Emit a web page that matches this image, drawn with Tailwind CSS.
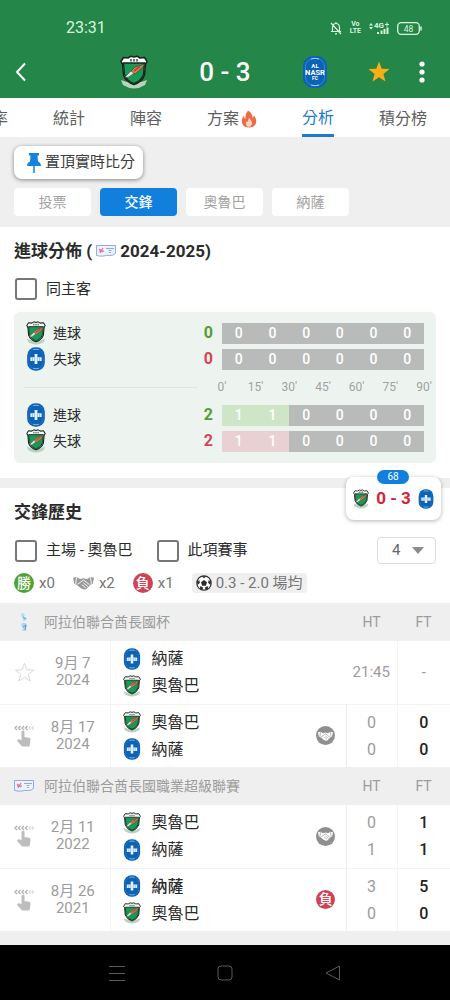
<!DOCTYPE html>
<html lang="zh-Hant">
<head>
  <meta charset="utf-8">
  <meta name="viewport" content="width=device-width, initial-scale=1">
  <title>奧魯巴 0 - 3 納薩</title>
  <script src="https://cdn.jsdelivr.net/npm/@tailwindcss/browser@4"></script>
</head>
<body class="min-h-screen flex flex-col bg-[#efefef] font-[Roboto,'Noto_Sans_CJK_TC',sans-serif] text-[#2b2b2b] overflow-x-hidden">

  <!-- Shared icons -->
  <svg class="hidden" aria-hidden="true">
    <symbol id="crest-home" viewBox="0 0 28 34">
      <path d="M1 25 Q14 31 27 25 L25 30 Q14 37 3 30Z" fill="#b9d3bf"/>
      <path d="M3.5 2.5 L8 3 L11 1.2 L14 2 L17 1.2 L20 3 L24.500 2.500 L27 6.500 L25.500 9 L24.500 20 Q22 27 14 29.500 Q6 27 3.500 20 L2.500 9 L1 6.500Z" fill="#fff" stroke="#15251b" stroke-width="1.500" stroke-linejoin="round"/>
      <path d="M3.500 8 H24.500 L23.500 19.500 Q21 26 14 28.500 Q7 26 4.500 19.500Z" fill="#179a56" stroke="#15251b" stroke-width="1.300"/>
      <path d="M10 4h2v2.500h-2zM13 4h2v2.500h-2zM16 4h2v2.500h-2z" fill="#6b756f"/>
      <path d="M5 22 L12 15 L15 17.500 L8 22.500Z" fill="#e9e4da" stroke="#44524a" stroke-width=".6"/>
      <path d="M11 16 L15 12 L25 9 L21 14 L15 19Z" fill="#c9855e" stroke="#44302a" stroke-width=".6"/>
      <path d="M14 16 L20 11.500" stroke="#d9382b" stroke-width="1.600"/>
    </symbol>
    <symbol id="crest-away" viewBox="0 0 26 34">
      <rect x=".5" y=".5" width="25" height="33" rx="11.500" fill="#0c62b4"/>
      <rect x="3" y="3" width="20" height="28" rx="9" fill="none" stroke="#2876c4"/>
      <path d="M9 3.800 Q13 2.500 17 3.800M9 30.200 Q13 31.500 17 30.200" fill="none" stroke="#a8d0f0"/>
      <path d="M5 14.500h16v5.500H5zM11 10h4v14h-4z" fill="#e6f1fb"/>
      <path d="M8 15v5M11 15v5M15 15v5M18 15v5" stroke="#5c9bd5" stroke-width=".8"/>
    </symbol>
    <symbol id="handshake" viewBox="0 0 24 16">
      <path d="M0 2 L4 1 L8 3.500 L12 2.500 L16 3.500 L20 1 L24 2 L22.500 9 L20 10 L15 15 L12.500 15.500 L9 14 L4 10 L1.500 9Z" fill="currentColor"/>
      <path d="M8 7.500 L12 4.500 L19 10M12 8 L17 12M10 10 L14.500 13.500M5 9.500 L8 7.500M4 1.500 L3 9.500M20 1.500 L21 9.500" stroke="var(--line,#fff)" stroke-width="1" fill="none"/>
    </symbol>
    <symbol id="league" viewBox="0 0 20 12">
      <path d="M.5 .5 H19.500 V8.500 Q17 11 13 10.500 Q10 10 8 11 Q4 11.500 .5 10.500Z" fill="#edf2fc" stroke="#8fadE4"/>
      <path d="M3 4l4 3M7 3L4 8M3 6h5" stroke="#e0768c" stroke-width="1.200"/>
      <path d="M10 3.500h8M12.500 5.500h3M13 7.500h2" stroke="#8fade4" stroke-width="1.200"/>
    </symbol>
    <symbol id="swipe" viewBox="0 0 20 22">
      <path d="M3 1 L1 3 L3 5M6.500 1 L4.500 3 L6.500 5M10 1 L8 3 L10 5M13.500 1 L11.500 3 L13.500 5" fill="none" stroke="#b5b5b5" stroke-width="1.500"/>
      <path d="M16.500 1.500 L15 3 L16.500 4.500M19.500 1.500 L18 3 L19.500 4.500" fill="none" stroke="#d4d4d4" stroke-width="1.200"/>
      <path d="M7.500 6.500 Q9 5 10.500 6.500 V12 L15 12.800 Q17 13.300 16.500 15 L15.500 21.500 H8 L3 15.800 Q3.500 13.800 5.800 14.300 L7.500 15.500Z" fill="#bdbdbd"/>
    </symbol>
  </svg>

  <header class="bg-[#248648] text-white">
    <div class="flex items-center justify-between pt-[18px] pl-[66px] pr-7">
      <span class="text-base leading-5 text-[#d9f5df]">23:31</span>
      <div class="flex items-center gap-2 text-[#d9f5df]">
        <svg class="w-3 h-[14px]" viewBox="0 0 12 14" fill="none" stroke="currentColor" stroke-width="1.2"><path d="M6 1v1.500M2.500 10V6Q3 2.500 6 2.500T9.500 6V10M1 10.500h10M5 12.800h2M1 2l10 11"/></svg>
        <span class="text-[7px] leading-[7px] font-bold text-center">Vo<br>LTE</span>
        <svg class="w-5 h-[14px]" viewBox="0 0 20 14" fill="currentColor"><path d="M0 4.500l2-2.500 2 2.500zM0 6l2 2.500L4 6z"/><text x="5" y="6.500" font-size="8" font-weight="700">4G</text><path d="M16 3h4v1h-4zM17.500 1.500h1v4h-1zM8 11h2v2H8zM11.500 9.500h2V13h-2zM14.500 8h2v5h-2zM17.500 6.500h2V13h-2z"/></svg>
        <svg class="w-[25px] h-[13px]" viewBox="0 0 25 13" fill="none" stroke="currentColor"><rect x=".7" y=".7" width="21.600" height="11.600" rx="3.500" stroke-width="1.300"/><path d="M24 4.500v4" stroke-width="1.500"/><text x="11.500" y="9.500" font-size="8.500" text-anchor="middle" fill="currentColor" stroke="none">48</text></svg>
      </div>
    </div>
    <div class="flex items-center justify-between h-[60px] pl-3 pr-4 pt-2">
      <button type="button" aria-label="返回" class="w-5 h-8">
        <svg class="w-5 h-5" viewBox="0 0 20 20" fill="none" stroke="#fff" stroke-width="2"><path d="M13 1.500 L5 10 L13 18.500"/></svg>
      </button>
      <div class="flex items-center gap-[51px] pl-12">
        <svg class="w-7 h-[34px]"><use href="#crest-home"/></svg>
        <h1 class="text-[26px] leading-8 font-medium whitespace-nowrap">0 - 3</h1>
        <svg class="w-[26px] h-[34px]" viewBox="0 0 26 34">
          <rect x="1" y="1" width="24" height="32" rx="10" fill="#0c62b4"/>
          <rect x="3.500" y="3.500" width="19" height="27" rx="8" fill="none" stroke="#2f86d6"/>
          <path d="M9 4 Q13 2.500 17 4M9 30 Q13 31.500 17 30" fill="none" stroke="#a8d0f0"/>
          <g fill="#fff" font-weight="700" text-anchor="middle"><text x="13" y="13" font-size="6">AL</text><text x="13" y="20" font-size="7.500">NASR</text><text x="13" y="25" font-size="5">FC</text></g>
        </svg>
      </div>
      <div class="flex items-center gap-5">
        <button type="button" aria-label="收藏" class="w-[22px] h-8">
          <svg class="w-[22px] h-[22px]" viewBox="0 0 22 22" fill="#fcae14"><path d="M11 .5 L13.700 7.800 L21.500 8.100 L15.400 12.900 L17.500 20.500 L11 16.200 L4.500 20.500 L6.600 12.900 L.5 8.100 L8.300 7.800Z"/></svg>
        </button>
        <button type="button" aria-label="更多" class="w-6 h-8 flex items-center justify-center">
          <svg class="w-[6px] h-[22px]" viewBox="0 0 6 22" fill="#fff"><circle cx="3" cy="3" r="2.600"/><circle cx="3" cy="11" r="2.600"/><circle cx="3" cy="19" r="2.600"/></svg>
        </button>
      </div>
    </div>
  </header>

  <nav class="bg-white overflow-hidden">
    <div class="flex gap-[45px] -ml-6 text-base leading-9 text-[#5e5e5e] whitespace-nowrap">
      <a href="#" class="shrink-0 pt-[3px]">賠率</a>
      <a href="#" class="shrink-0 pt-[3px]">統計</a>
      <a href="#" class="shrink-0 pt-[3px]">陣容</a>
      <a href="#" class="shrink-0 pt-[3px] flex items-center gap-[2px]">方案
        <svg class="w-4 h-[18px]" viewBox="0 0 16 18"><path d="M7 .5 Q12 4 11.500 8 Q13 7 12.800 5 Q16 9 15 13 Q13.500 17.500 8 17.500 Q2.500 17.500 1 13 Q0 9 3 5.500 Q3 8 4.500 9 Q4 4 7 .5Z" fill="#ec6a45"/><path d="M8 8 Q11.500 11 11 14 Q10 17 8 17 Q5.500 17 5 14 Q4.800 12 6 11 Q6.500 12 7 12 Q6.800 10 8 8Z" fill="#fbd3b8"/></svg>
      </a>
      <a href="#" aria-current="page" class="shrink-0 text-[#1c7cd0] border-b-[3px] border-[#1c7cd0] pt-[3px] leading-[33px]">分析</a>
      <a href="#" class="shrink-0 pt-[3px]">積分榜</a>
    </div>
  </nav>

  <div class="px-[14px] pt-[9px] pb-[11px]">
    <button type="button" class="flex items-center gap-[2px] h-[33px] pl-[11px] pr-2 bg-white rounded-lg shadow-[0_1px_4px_rgba(0,0,0,0.45)] text-[15px] text-[#3d3d3d] whitespace-nowrap">
      <svg class="w-[18px] h-[22px]" viewBox="0 0 18 22"><path d="M4 1h10v2.500h-1.500l.5 6Q16 11 16 14H2Q2 11 5 9.500l.5-6H4z" fill="#1583dc"/><path d="M9 13v8" stroke="#1583dc" stroke-width="1.500"/></svg>
      置頂實時比分
    </button>
    <div class="flex gap-[9px] mt-[9px] text-[14px] leading-7 text-[#a2a2a2]">
      <button type="button" class="w-[77px] bg-white rounded">投票</button>
      <button type="button" class="w-[77px] bg-[#1180dc] text-white font-medium rounded">交鋒</button>
      <button type="button" class="w-[77px] bg-white rounded">奧魯巴</button>
      <button type="button" class="w-[77px] bg-white rounded">納薩</button>
    </div>
  </div>

  <!-- Goal distribution -->
  <section class="bg-white px-[14px] pt-3 pb-[15px]">
    <h2 class="flex items-center text-[17px] leading-6 font-bold whitespace-nowrap">進球分佈 (<svg class="w-5 h-3 ml-1 mr-1"><use href="#league"/></svg>2024-2025)</h2>
    <label class="flex items-center gap-[9px] mt-[14px] pl-px text-[15px] leading-6">
      <input type="checkbox" class="appearance-none size-[22px] border-2 border-[#777] rounded-[3px]">同主客
    </label>

    <div class="mt-[11px] bg-[#edf4f0] rounded-md pt-2 pb-[9px] pl-[10px] pr-3 text-[14px]">
      <div class="flex items-center h-[26px]">
        <div class="flex items-center w-[198px]">
          <svg class="w-6 h-6 mr-[5px]"><use href="#crest-home"/></svg>進球
          <b class="ml-auto mr-[9px] text-base text-[#519f35]">0</b>
        </div>
        <div class="grid grid-cols-6 flex-1 leading-[21px] font-medium text-white text-center bg-[#b8bbb9]"><span>0</span><span>0</span><span>0</span><span>0</span><span>0</span><span>0</span></div>
      </div>
      <div class="flex items-center h-[26px]">
        <div class="flex items-center w-[198px]">
          <svg class="w-6 h-6 mr-[5px]"><use href="#crest-away"/></svg>失球
          <b class="ml-auto mr-[9px] text-base text-[#d14756]">0</b>
        </div>
        <div class="grid grid-cols-6 flex-1 leading-[21px] font-medium text-white text-center bg-[#b8bbb9]"><span>0</span><span>0</span><span>0</span><span>0</span><span>0</span><span>0</span></div>
      </div>
      <div class="flex items-center h-[30px]">
        <div class="w-[198px] pr-6"><div class="border-t border-[#dfe5e2]"></div></div>
        <div class="flex justify-between flex-1 text-[12px] text-[#a0a3a1]">
          <span class="w-0 flex justify-center">0'</span><span class="w-0 flex justify-center">15'</span><span class="w-0 flex justify-center">30'</span><span class="w-0 flex justify-center">45'</span><span class="w-0 flex justify-center">60'</span><span class="w-0 flex justify-center">75'</span><span class="w-0 flex justify-center">90'</span>
        </div>
      </div>
      <div class="flex items-center h-[26px]">
        <div class="flex items-center w-[198px]">
          <svg class="w-6 h-6 mr-[5px]"><use href="#crest-away"/></svg>進球
          <b class="ml-auto mr-[9px] text-base text-[#519f35]">2</b>
        </div>
        <div class="grid grid-cols-6 flex-1 leading-[21px] font-medium text-white text-center bg-[#b8bbb9]"><span class="bg-[#cfe5c8]">1</span><span class="bg-[#cfe5c8]">1</span><span>0</span><span>0</span><span>0</span><span>0</span></div>
      </div>
      <div class="flex items-center h-[26px]">
        <div class="flex items-center w-[198px]">
          <svg class="w-6 h-6 mr-[5px]"><use href="#crest-home"/></svg>失球
          <b class="ml-auto mr-[9px] text-base text-[#d14756]">2</b>
        </div>
        <div class="grid grid-cols-6 flex-1 leading-[21px] font-medium text-white text-center bg-[#b8bbb9]"><span class="bg-[#e9d0d2]">1</span><span class="bg-[#e9d0d2]">1</span><span>0</span><span>0</span><span>0</span><span>0</span></div>
      </div>
    </div>
  </section>

  <!-- Head to head -->
  <section class="relative bg-white mt-[10px]">
    <!-- Floating live score -->
    <div class="absolute -top-[11px] right-[9px] w-[95px] h-[43px] bg-white rounded-lg shadow-[0_1px_4px_rgba(0,0,0,0.3)] flex items-center justify-between px-[7px]">
      <span class="absolute -top-[7px] left-[31px] w-8 rounded-full bg-[#1180dc] text-white text-[10px] leading-[14px] text-center">68</span>
      <svg class="w-4 h-5"><use href="#crest-home"/></svg>
      <span class="text-[17px] font-bold text-[#d32338]">0 - 3</span>
      <svg class="w-4 h-5"><use href="#crest-away"/></svg>
    </div>

    <div class="px-[14px] pt-3 pb-[9px]">
      <h2 class="text-[17px] leading-6 font-bold">交鋒歷史</h2>
      <div class="flex items-center mt-[13px] pl-px text-[15px] h-[27px]">
        <label class="flex items-center gap-[9px]"><input type="checkbox" class="appearance-none size-[22px] border-2 border-[#777] rounded-[3px]">主場 - 奧魯巴</label>
        <label class="flex items-center gap-[9px] ml-6"><input type="checkbox" class="appearance-none size-[22px] border-2 border-[#777] rounded-[3px]">此項賽事</label>
        <div class="relative ml-auto">
          <select aria-label="場數" class="appearance-none w-[59px] h-[27px] pl-[14px] border border-[#dcdcdc] rounded text-[15px] text-[#666] bg-white"><option>4</option></select>
          <svg class="absolute right-3 top-[10px] w-3 h-[7px] pointer-events-none" viewBox="0 0 12 7"><path d="M0 0h12L6 7z" fill="#8c8c8c"/></svg>
        </div>
      </div>
      <div class="flex items-center mt-2 h-[22px] text-[15px] text-[#757575] whitespace-nowrap">
        <span class="size-5 rounded-full bg-[#4da334] text-white text-[14px] leading-5 font-medium text-center">勝</span><span class="ml-[5px]">x0</span>
        <svg class="w-[21px] h-[14px] ml-[18px] text-[#999]"><use href="#handshake"/></svg><span class="ml-[5px]">x2</span>
        <span class="size-5 ml-[18px] rounded-full bg-[#cf4258] text-white text-[14px] leading-5 font-medium text-center">負</span><span class="ml-[5px]">x1</span>
        <span class="flex items-center gap-1 ml-[18px] px-1 h-5 bg-[#efefef] rounded-sm">
          <svg class="size-4" viewBox="0 0 16 16"><circle cx="8" cy="8" r="7.200" fill="#fff" stroke="#2b2b2b" stroke-width="1.200"/><path d="M8 5l3 2.200-1.200 3.500H6.200L5 7.200zM5.500 1.200h5L8 3.200zM1 6l2.500-.5.3 2.500L1.500 10zM15 6l-2.500-.5-.3 2.500 2.300 2zM3.800 13.500l.7-2.500 2.500 1.500L6.500 15zM12.200 13.500l-.7-2.500L9 12.500l.5 2.500z" fill="#2b2b2b"/></svg>
          0.3 - 2.0 場均
        </span>
      </div>
    </div>

    <table class="w-full table-fixed text-center text-[#9c9c9c]">
      <colgroup><col class="w-[48px]"><col class="w-[62px]"><col><col class="w-10"><col class="w-[51px]"><col class="w-[53px]"></colgroup>
      <tbody>
        <tr class="bg-[#efefef] h-[38px] text-[14px]">
          <th scope="colgroup" colspan="4" class="font-normal">
            <div class="flex items-center gap-[10px] pl-[14px]">
              <svg class="w-5 h-5" viewBox="0 0 20 20"><path d="M8 1q4 1 2 4l3 1-2 3q-3 0-2-3Q6 4 8 1zM8 11q5-1 5 3l-2 2 2 3H8l1-3q-3-2-1-5z" fill="#a9dcf5"/><path d="M9 5l3 2M9 15l3-2-1 5" stroke="#5f8fc0" fill="none"/></svg>
              阿拉伯聯合酋長國杯
            </div>
          </th>
          <th scope="col" class="font-normal">HT</th>
          <th scope="col" class="font-normal">FT</th>
        </tr>
        <tr class="h-[63px] border-b border-[#f3f3f3]">
          <td><button type="button" aria-label="收藏" class="block ml-[14px]"><svg class="w-[21px] h-[21px]" viewBox="0 0 22 22" fill="none" stroke="#d6d6d6"><path d="M11 1.500 L13.500 8.200 L20.500 8.500 L15 12.900 L17 20 L11 16 L5 20 L7 12.900 L1.500 8.500 L8.500 8.200Z"/></svg></button></td>
          <td class="text-[15px] leading-[17px] pr-3 border-r border-[#f3f3f3] whitespace-nowrap">9月 7<br>2024</td>
          <td colspan="2" class="text-base leading-[27px] text-[#2b2b2b]">
            <div class="flex items-center gap-[11px] pl-3"><svg class="w-[18px] h-[22px]"><use href="#crest-away"/></svg>納薩</div>
            <div class="flex items-center gap-[11px] pl-3"><svg class="w-[18px] h-[22px]"><use href="#crest-home"/></svg>奧魯巴</div>
          </td>
          <td class="text-[15px] border-r border-[#f3f3f3]">21:45</td>
          <td class="text-[15px]">-</td>
        </tr>
        <tr class="h-[63px]">
          <td><svg class="w-5 h-[22px] ml-[14px]"><use href="#swipe"/></svg></td>
          <td class="text-[15px] leading-[17px] pr-3 border-r border-[#f3f3f3] whitespace-nowrap">8月 17<br>2024</td>
          <td class="text-base leading-[27px] text-[#2b2b2b]">
            <div class="flex items-center gap-[11px] pl-3"><svg class="w-[18px] h-[22px]"><use href="#crest-home"/></svg>奧魯巴</div>
            <div class="flex items-center gap-[11px] pl-3"><svg class="w-[18px] h-[22px]"><use href="#crest-away"/></svg>納薩</div>
          </td>
          <td class="border-r border-[#ececec]"><span class="size-[19px] mx-auto rounded-full bg-[#8f8f8f] text-white [--line:#8f8f8f] flex items-center justify-center"><svg class="w-[15px] h-[10px]"><use href="#handshake"/></svg></span></td>
          <td class="text-base leading-[27px] border-r border-[#f3f3f3]">0<br>0</td>
          <td class="text-base leading-[27px] font-medium text-[#222]">0<br>0</td>
        </tr>
      </tbody>
      <tbody>
        <tr class="bg-[#efefef] h-[38px] text-[14px]">
          <th scope="colgroup" colspan="4" class="font-normal">
            <div class="flex items-center gap-[10px] pl-[14px]">
              <svg class="w-5 h-3"><use href="#league"/></svg>
              阿拉伯聯合酋長國職業超級聯賽
            </div>
          </th>
          <th scope="col" class="font-normal">HT</th>
          <th scope="col" class="font-normal">FT</th>
        </tr>
        <tr class="h-[63px] border-b border-[#f3f3f3]">
          <td><svg class="w-5 h-[22px] ml-[14px]"><use href="#swipe"/></svg></td>
          <td class="text-[15px] leading-[17px] pr-3 border-r border-[#f3f3f3] whitespace-nowrap">2月 11<br>2022</td>
          <td class="text-base leading-[27px] text-[#2b2b2b]">
            <div class="flex items-center gap-[11px] pl-3"><svg class="w-[18px] h-[22px]"><use href="#crest-home"/></svg>奧魯巴</div>
            <div class="flex items-center gap-[11px] pl-3"><svg class="w-[18px] h-[22px]"><use href="#crest-away"/></svg>納薩</div>
          </td>
          <td class="border-r border-[#ececec]"><span class="size-[19px] mx-auto rounded-full bg-[#8f8f8f] text-white [--line:#8f8f8f] flex items-center justify-center"><svg class="w-[15px] h-[10px]"><use href="#handshake"/></svg></span></td>
          <td class="text-base leading-[27px] border-r border-[#f3f3f3]">0<br>1</td>
          <td class="text-base leading-[27px] font-medium text-[#222]">1<br>1</td>
        </tr>
        <tr class="h-[63px]">
          <td><svg class="w-5 h-[22px] ml-[14px]"><use href="#swipe"/></svg></td>
          <td class="text-[15px] leading-[17px] pr-3 border-r border-[#f3f3f3] whitespace-nowrap">8月 26<br>2021</td>
          <td class="text-base leading-[27px] text-[#2b2b2b]">
            <div class="flex items-center gap-[11px] pl-3 font-medium"><svg class="w-[18px] h-[22px]"><use href="#crest-away"/></svg>納薩</div>
            <div class="flex items-center gap-[11px] pl-3"><svg class="w-[18px] h-[22px]"><use href="#crest-home"/></svg>奧魯巴</div>
          </td>
          <td class="border-r border-[#ececec]"><span class="block size-[19px] mx-auto rounded-full bg-[#cf4258] text-white text-[14px] leading-[19px] font-medium">負</span></td>
          <td class="text-base leading-[27px] border-r border-[#f3f3f3]">3<br>0</td>
          <td class="text-base leading-[27px] font-medium text-[#222]">5<br>0</td>
        </tr>
      </tbody>
    </table>
  </section>

  <!-- System navigation -->
  <footer class="mt-auto bg-black h-[55px] flex items-center justify-center gap-[92px]">
    <button type="button" aria-label="最近"><svg class="size-4" viewBox="0 0 16 16" stroke="#5a5a5a"><path d="M0 1.500h16M0 8.500h16M0 15.500h16"/></svg></button>
    <button type="button" aria-label="主頁"><svg class="size-4" viewBox="0 0 16 16" fill="none" stroke="#5a5a5a"><rect x="1" y="1" width="14" height="14" rx="3"/></svg></button>
    <button type="button" aria-label="返回"><svg class="size-4" viewBox="0 0 16 16" fill="none" stroke="#5a5a5a" stroke-linejoin="round"><path d="M14.500 1v14L1 8z"/></svg></button>
  </footer>
</body>
</html>
